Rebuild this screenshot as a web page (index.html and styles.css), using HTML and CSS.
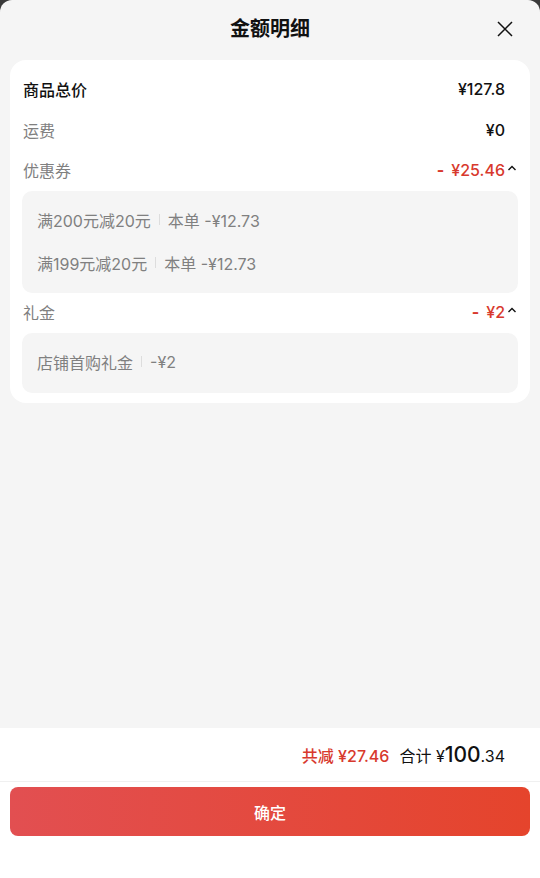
FILE: index.html
```html
<!DOCTYPE html>
<html>
<head>
  <meta charset="utf-8">
  <title>金额明细</title>
  <link rel="stylesheet" href="styles.css">
</head>
<body>
  <div class="sheet">
    <div class="header">
      <h1 class="title">金额明细</h1>
      <svg class="close" width="16" height="16" viewBox="0 0 16 16">
        <path d="M1 1 L15 15 M15 1 L1 15" stroke="#111" stroke-width="1.5" fill="none"/>
      </svg>
    </div>

    <div class="main">
      <div class="card">
        <div class="row">
          <span class="label strong">商品总价</span>
          <span class="value plain">¥127.8</span>
        </div>
        <div class="row">
          <span class="label">运费</span>
          <span class="value plain">¥0</span>
        </div>
        <div class="row">
          <span class="label">优惠券</span>
          <span class="value red"><span class="minus">-</span>¥25.46<svg class="caret" width="12" height="8" viewBox="0 0 12 8"><path d="M2.5 6 L6 2.5 L9.5 6" stroke="#111" stroke-width="1.4" fill="none"/></svg></span>
        </div>
        <div class="detail">
          <div class="detail-row">满200元减20元<span class="sep"></span>本单 -¥12.73</div>
          <div class="detail-row">满199元减20元<span class="sep"></span>本单 -¥12.73</div>
        </div>
        <div class="row">
          <span class="label">礼金</span>
          <span class="value red"><span class="minus">-</span>¥2<svg class="caret" width="12" height="8" viewBox="0 0 12 8"><path d="M2.5 6 L6 2.5 L9.5 6" stroke="#111" stroke-width="1.4" fill="none"/></svg></span>
        </div>
        <div class="detail single">
          <div class="detail-row">店铺首购礼金<span class="sep"></span>-¥2</div>
        </div>
      </div>
    </div>

    <div class="footer">
      <div class="summary">
        <span class="saved">共减 ¥27.46</span>
        <span class="total">合计 ¥<span class="big">100</span>.34</span>
      </div>
      <button class="confirm">确定</button>
    </div>
  </div>
</body>
</html>
```

FILE: styles.css
```css
* {
  box-sizing: border-box;
}

html,
body {
  margin: 0;
  height: 100%;
}

body {
  background-color: #3a3a3a;
  font-family: Inter, "Noto Sans CJK SC", sans-serif;
  color: #111;
}

.sheet {
  height: 878px;
  display: flex;
  flex-direction: column;
  background-color: #f5f5f5;
  border-radius: 12px 12px 0 0;
  overflow: hidden;
}

.header {
  position: relative;
  height: 60px;
  display: flex;
  align-items: center;
  justify-content: center;
}

.title {
  margin: 0;
  font-size: 20px;
  font-weight: 700;
  line-height: 1;
  margin-top: -2px;
}

.close {
  position: absolute;
  right: 27px;
  top: 21px;
}

.main {
  flex: 1;
  padding: 0 10px;
}

.card {
  background-color: #fff;
  border-radius: 16px;
  padding: 10px 12px 10px 12px;
}

.row {
  height: 40px;
  display: flex;
  align-items: center;
  justify-content: space-between;
  font-size: 16px;
  padding-bottom: 3px;
}

.row:first-child {
  height: 41px;
}

.label {
  margin-left: 1px;
  color: #808080;
}

.label.strong {
  color: #111;
  font-weight: 500;
}

.value {
  display: flex;
  align-items: center;
  font-weight: 500;
}

.value.plain {
  margin-right: 13px;
}

.value.red {
  color: #d8392d;
}

.minus {
  margin-right: 7px;
  font-weight: 700;
}

.caret {
  margin-left: 1px;
  margin-top: -3px;
}

.detail {
  background-color: #f5f5f5;
  border-radius: 10px;
  padding: 8px 15px;
}

.detail.single {
  padding: 8px 15px 9px;
}

.detail-row {
  height: 43px;
  display: flex;
  align-items: center;
  font-size: 16px;
  color: #808080;
  padding-bottom: 2px;
}

.sep {
  display: inline-block;
  width: 1px;
  height: 11px;
  background-color: #ddd;
  margin: 0 8px;
}

.footer {
  background-color: #fff;
  padding-bottom: 42px;
}

.summary {
  height: 54px;
  display: flex;
  align-items: center;
  justify-content: flex-end;
  padding-right: 35px;
  font-size: 16px;
  border-bottom: 1px solid #f0f0f0;
}

.saved {
  color: #d8392d;
  font-weight: 500;
  margin-right: 10px;
}

.total {
  font-weight: 400;
}

.big {
  font-size: 21px;
  font-weight: 500;
}

.confirm {
  display: block;
  width: 520px;
  height: 49px;
  margin: 5px 10px 0;
  border: none;
  border-radius: 8px;
  background: linear-gradient(90deg, #e24f51, #e5442c);
  color: #fff;
  font-family: "Noto Sans CJK SC", sans-serif;
  font-size: 16px;
  font-weight: 500;
}
```
